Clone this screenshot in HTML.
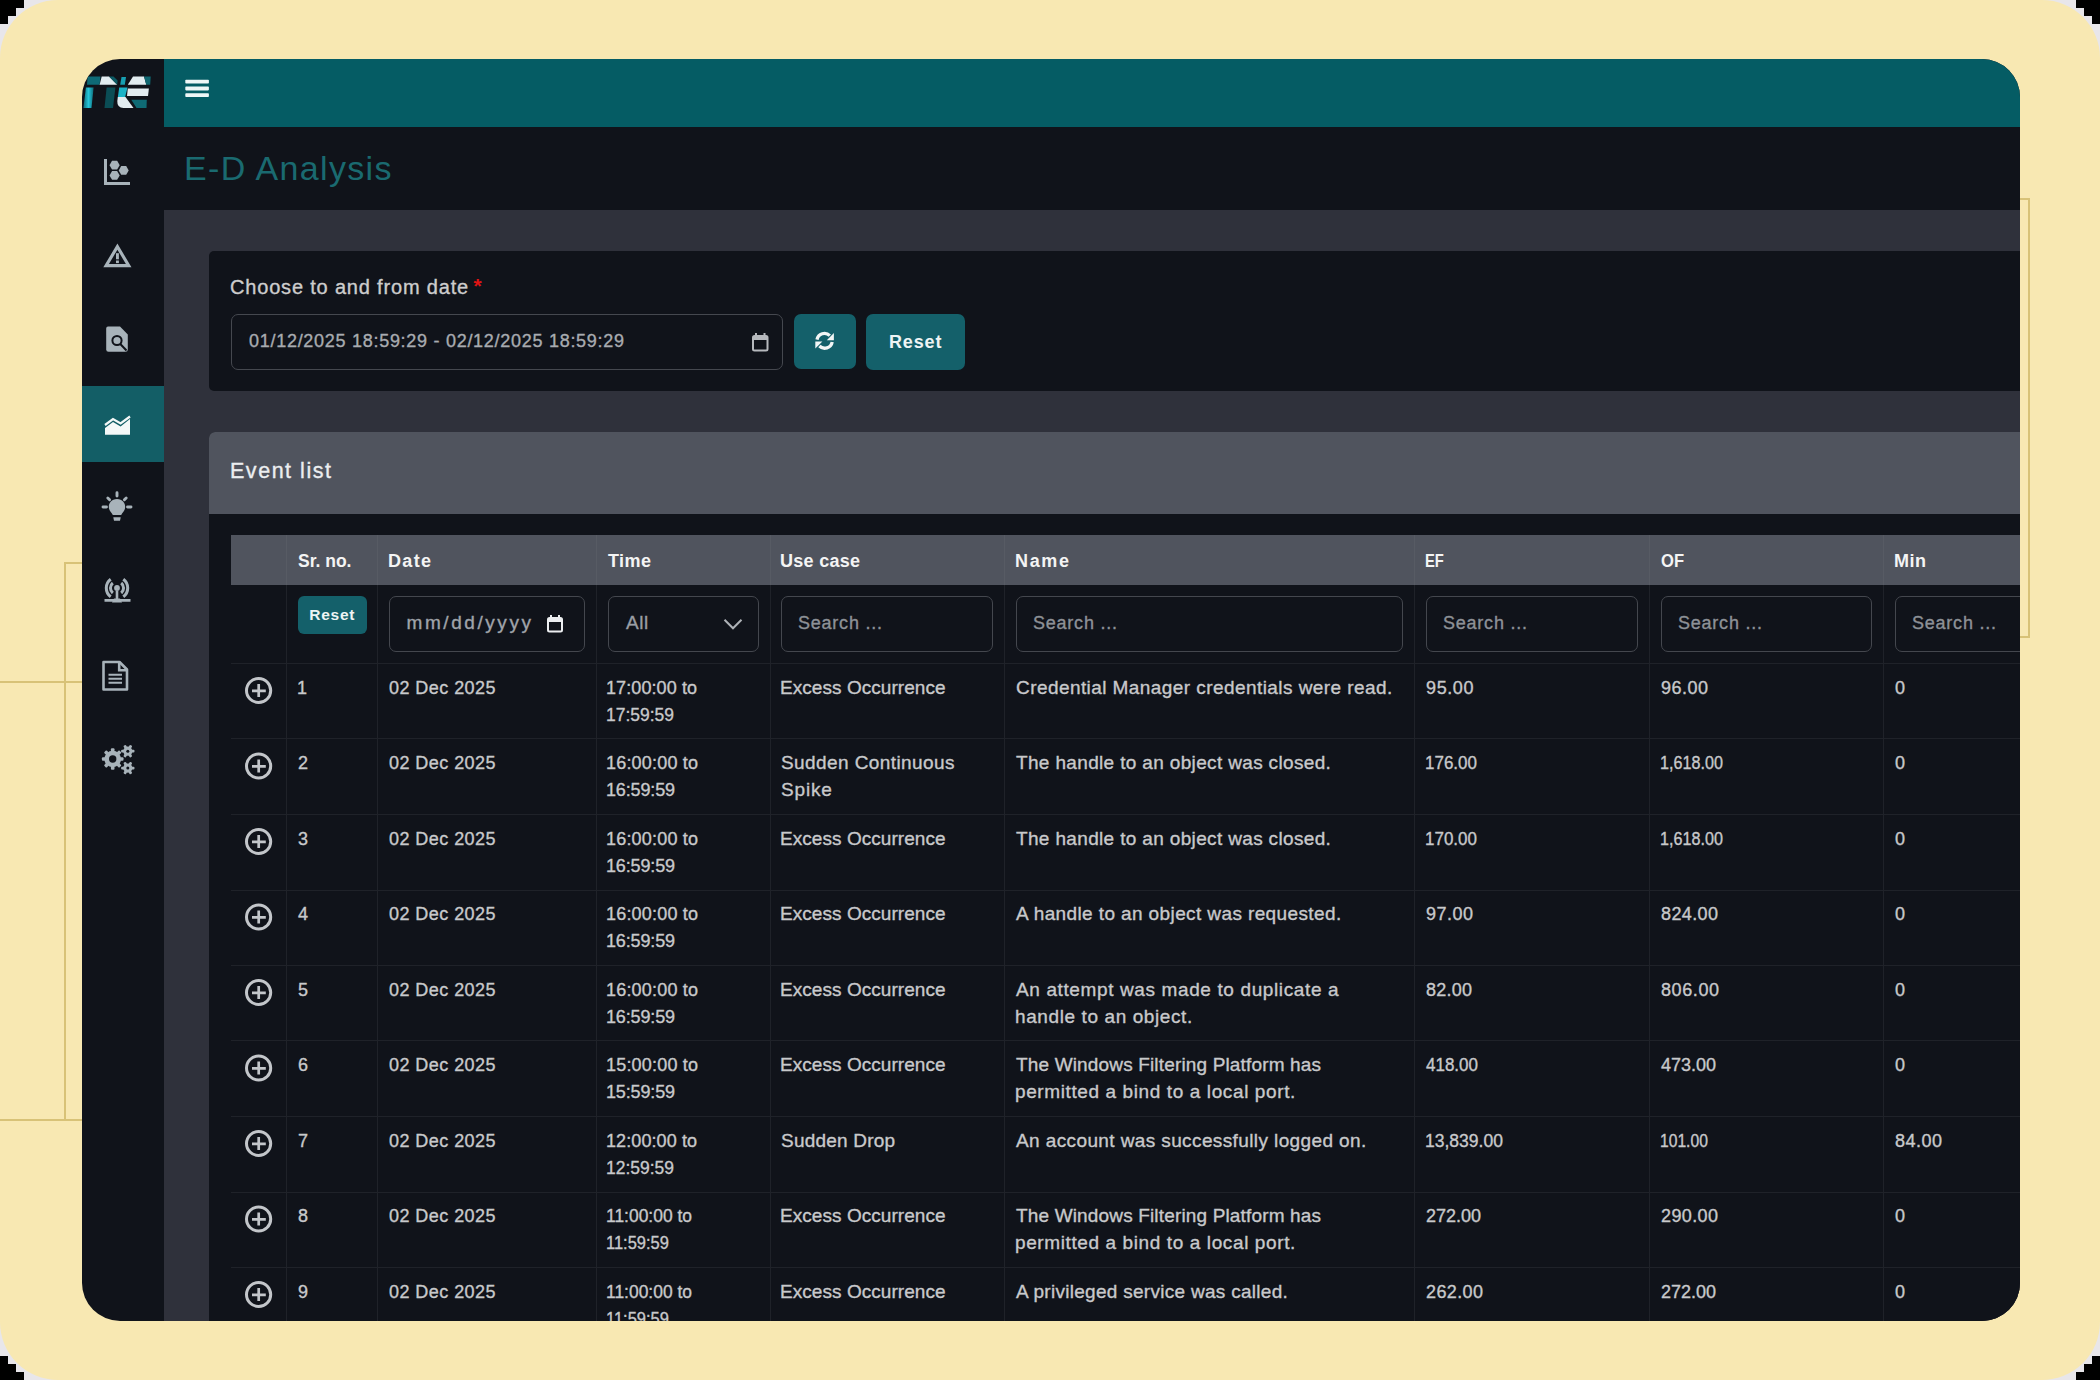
<!DOCTYPE html>
<html><head><meta charset="utf-8">
<style>
*{box-sizing:border-box;margin:0;padding:0}
html,body{width:2100px;height:1380px;overflow:hidden;background:#e8e6ea;font-family:"Liberation Sans",sans-serif}
.abs{position:absolute}
.bk{position:absolute;background:#000}
#yel{left:0;top:0;width:2100px;height:1380px;border-radius:58px;background:#f8e8b2}
.ln{position:absolute;background:#d8c277}
#frame{left:82px;top:59px;width:1938px;height:1262px;border-radius:38px;overflow:hidden;background:#10131a}
#pg{position:absolute;left:-82px;top:-59px;width:2100px;height:1380px}
.r{position:absolute}
.t{position:absolute;white-space:nowrap;-webkit-text-stroke:0.35px currentColor}
.ns{-webkit-text-stroke:0}
svg{position:absolute;left:0;top:0}
</style></head>
<body>
<div class="bk" style="left:0;top:0px;width:24px;height:8px"></div>
<div class="bk" style="right:0;top:0px;width:24px;height:8px"></div>
<div class="bk" style="left:0;bottom:0px;width:24px;height:8px"></div>
<div class="bk" style="right:0;bottom:0px;width:24px;height:8px"></div>
<div class="bk" style="left:0;top:8px;width:16px;height:8px"></div>
<div class="bk" style="right:0;top:8px;width:16px;height:8px"></div>
<div class="bk" style="left:0;bottom:8px;width:16px;height:8px"></div>
<div class="bk" style="right:0;bottom:8px;width:16px;height:8px"></div>
<div class="bk" style="left:0;top:16px;width:8px;height:8px"></div>
<div class="bk" style="right:0;top:16px;width:8px;height:8px"></div>
<div class="bk" style="left:0;bottom:16px;width:8px;height:8px"></div>
<div class="bk" style="right:0;bottom:16px;width:8px;height:8px"></div>
<div id="yel" class="abs"></div>
<div class="ln" style="left:2028px;top:198px;width:2px;height:440px"></div>
<div class="ln" style="left:2020px;top:198px;width:10px;height:2px"></div>
<div class="ln" style="left:2020px;top:636px;width:10px;height:2px"></div>
<div class="ln" style="left:64px;top:562px;width:2px;height:559px"></div>
<div class="ln" style="left:64px;top:562px;width:18px;height:2px"></div>
<div class="ln" style="left:0px;top:681px;width:82px;height:2px"></div>
<div class="ln" style="left:0px;top:1119px;width:82px;height:2px"></div>
<div id="frame" class="abs"><div id="pg">
<div class="r" style="left:164px;top:59px;width:1856px;height:68px;background:#055c64;"></div>
<div class="r" style="left:164px;top:210px;width:1856px;height:1111px;background:#2f313b;"></div>
<div class="r" style="left:82px;top:386px;width:82px;height:76px;background:#135e66;"></div>
<div class="r" style="left:209px;top:251px;width:1811px;height:140px;background:#10131a;border-radius:5px 0 0 5px"></div>
<div class="r" style="left:231px;top:314px;width:552px;height:56px;border:1.5px solid #45484f;border-radius:7px"></div>
<div class="r" style="left:794px;top:314px;width:62px;height:55px;background:#14606a;border-radius:7px"></div>
<div class="r" style="left:866px;top:314px;width:99px;height:56px;background:#14606a;border-radius:7px"></div>
<div class="r" style="left:209px;top:432px;width:1811px;height:889px;background:#10131a;border-radius:6px 0 0 0"></div>
<div class="r" style="left:209px;top:432px;width:1811px;height:82px;background:#50545e;border-radius:6px 0 0 0"></div>
<div class="r" style="left:231px;top:535px;width:1789px;height:50px;background:#50545e;"></div>
<div class="r" style="left:286px;top:585px;width:1px;height:740px;background:#1f2229;"></div>
<div class="r" style="left:286px;top:535px;width:1px;height:50px;background:#575b64;"></div>
<div class="r" style="left:377px;top:585px;width:1px;height:740px;background:#1f2229;"></div>
<div class="r" style="left:377px;top:535px;width:1px;height:50px;background:#575b64;"></div>
<div class="r" style="left:596px;top:585px;width:1px;height:740px;background:#1f2229;"></div>
<div class="r" style="left:596px;top:535px;width:1px;height:50px;background:#575b64;"></div>
<div class="r" style="left:770px;top:585px;width:1px;height:740px;background:#1f2229;"></div>
<div class="r" style="left:770px;top:535px;width:1px;height:50px;background:#575b64;"></div>
<div class="r" style="left:1004px;top:585px;width:1px;height:740px;background:#1f2229;"></div>
<div class="r" style="left:1004px;top:535px;width:1px;height:50px;background:#575b64;"></div>
<div class="r" style="left:1414px;top:585px;width:1px;height:740px;background:#1f2229;"></div>
<div class="r" style="left:1414px;top:535px;width:1px;height:50px;background:#575b64;"></div>
<div class="r" style="left:1649px;top:585px;width:1px;height:740px;background:#1f2229;"></div>
<div class="r" style="left:1649px;top:535px;width:1px;height:50px;background:#575b64;"></div>
<div class="r" style="left:1883px;top:585px;width:1px;height:740px;background:#1f2229;"></div>
<div class="r" style="left:1883px;top:535px;width:1px;height:50px;background:#575b64;"></div>
<div class="r" style="left:231px;top:663px;width:1789px;height:1px;background:#1f2229;"></div>
<div class="r" style="left:231px;top:738px;width:1789px;height:1px;background:#1f2229;"></div>
<div class="r" style="left:231px;top:814px;width:1789px;height:1px;background:#1f2229;"></div>
<div class="r" style="left:231px;top:890px;width:1789px;height:1px;background:#1f2229;"></div>
<div class="r" style="left:231px;top:965px;width:1789px;height:1px;background:#1f2229;"></div>
<div class="r" style="left:231px;top:1040px;width:1789px;height:1px;background:#1f2229;"></div>
<div class="r" style="left:231px;top:1116px;width:1789px;height:1px;background:#1f2229;"></div>
<div class="r" style="left:231px;top:1192px;width:1789px;height:1px;background:#1f2229;"></div>
<div class="r" style="left:231px;top:1267px;width:1789px;height:1px;background:#1f2229;"></div>
<div class="r" style="left:298px;top:596px;width:69px;height:38px;background:#14606a;border-radius:6px"></div>
<div class="r" style="left:389px;top:596px;width:196px;height:55.5px;border:1.5px solid #44474e;border-radius:7px"></div>
<div class="r" style="left:607.5px;top:596px;width:151.5px;height:55.5px;border:1.5px solid #44474e;border-radius:7px"></div>
<div class="r" style="left:781px;top:596px;width:212px;height:55.5px;border:1.5px solid #44474e;border-radius:7px"></div>
<div class="r" style="left:1016px;top:596px;width:387px;height:55.5px;border:1.5px solid #44474e;border-radius:7px"></div>
<div class="r" style="left:1426px;top:596px;width:211.5px;height:55.5px;border:1.5px solid #44474e;border-radius:7px"></div>
<div class="r" style="left:1660.5px;top:596px;width:211.5px;height:55.5px;border:1.5px solid #44474e;border-radius:7px"></div>
<div class="r" style="left:1895px;top:596px;width:215px;height:55.5px;border:1.5px solid #44474e;border-radius:7px"></div>
<svg width="2100" height="1380" viewBox="0 0 2100 1380">
<defs><linearGradient id="lgc" x1="0" y1="0" x2="1" y2="0"><stop offset="0" stop-color="#0f6d7a"/><stop offset="0.5" stop-color="#25c6da"/><stop offset="1" stop-color="#0f6d7a"/></linearGradient></defs>
<polygon points="87.6,76.6 100.5,76.6 99.6,84.7 87,84.7" fill="#0e6a76"/>
<polygon points="101.7,76.6 109,76.6 117.2,84.7 99.6,84.7" fill="#e2ecf0"/>
<polygon points="109,76.6 113.5,76.6 117.6,80.5 117.2,84.7" fill="#0b5a64"/>
<polygon points="121.5,77 126,77 124.8,84.7 120.2,84.7" fill="#179fb2"/>
<polygon points="133,76.6 144,76.6 146.3,84.7 127.8,84.7" fill="#e2ecf0"/>
<polygon points="144,76.6 150.7,76.6 150.2,84.7 146.3,84.7" fill="#0f6670"/>
<polygon points="85.9,87.5 93.6,87.5 91.5,107.9 83.4,107.9" fill="url(#lgc)"/>
<polygon points="106.6,87.5 115.4,87.5 113,107.9 104.5,107.9" fill="#0b4d55"/>
<polygon points="119.2,87.5 127.5,87.5 125,97.5 117.8,97.5" fill="#1cb3c7"/>
<path d="M117.8 97 H125.5 L133.5 107.9 H123.5 Q117 107.9 117.3 101 Z" fill="#e2ecf0"/>
<polygon points="127.8,88.5 148.9,88.5 148,96 127,96" fill="#e2ecf0"/>
<polygon points="131.3,99.8 146.8,99.8 146.5,107.9 136.5,107.9" fill="#0f6a74"/>
<path d="M105.5 159 V183.5 H130" fill="none" stroke="#a8b3ba" stroke-width="3"/>
<polygon points="119.70,165.20 117.15,169.62 112.05,169.62 109.50,165.20 112.05,160.78 117.15,160.78" fill="#a8b3ba"/>
<polygon points="119.70,175.40 117.15,179.82 112.05,179.82 109.50,175.40 112.05,170.98 117.15,170.98" fill="#a8b3ba"/>
<polygon points="128.70,170.40 126.20,174.73 121.20,174.73 118.70,170.40 121.20,166.07 126.20,166.07" fill="#a8b3ba"/>
<path fill-rule="evenodd" d="M117.4 243.6 L103.3 267.3 H131.5 Z M117.4 249.8 L108.9 263.9 H125.9 Z" fill="#a8b3ba"/>
<rect x="116" y="253.2" width="2.9" height="6.1" fill="#a8b3ba"/><rect x="116" y="260.5" width="2.9" height="2.6" fill="#a8b3ba"/>
<path d="M108 326.5 H120 L127.8 334.5 V349.5 Q127.8 351.8 125.5 351.8 H108.5 Q106.2 351.8 106.2 349.5 V328.5 Q106.2 326.5 108 326.5 Z" fill="#a8b3ba"/>
<circle cx="117" cy="340.5" r="4.6" fill="none" stroke="#10131a" stroke-width="2"/><path d="M120.3 344 L126.5 350.5" stroke="#10131a" stroke-width="2"/>
<path d="M105 428 L113 422 L120.6 426.5 L130 419 V434.8 H105 Z" fill="#f4f8f8"/>
<path d="M105 425 L113 419 L120.6 423.5 L130 416.5" fill="none" stroke="#f4f8f8" stroke-width="2.2"/>
<path d="M117 499 C111.6 499 108.8 503 108.8 507 C108.8 510.5 111.5 512.5 112.8 515 H121.2 C122.5 512.5 125.2 510.5 125.2 507 C125.2 503 122.4 499 117 499 Z" fill="#a8b3ba"/>
<path d="M113.3 517.3 H120.7 L120 520.8 H114 Z" fill="#a8b3ba"/>
<path d="M117 492.8 V496 M107.8 498 L109.6 499.8 M126.2 498 L124.4 499.8 M103 507 H106.5 M127.5 507 H131" stroke="#a8b3ba" stroke-width="2.9" stroke-linecap="round"/>
<circle cx="117" cy="588" r="2.9" fill="#a8b3ba"/>
<path d="M112.8 583 A6.5 6.5 0 0 0 112.8 593 M121.2 583 A6.5 6.5 0 0 1 121.2 593" fill="none" stroke="#a8b3ba" stroke-width="3"/>
<path d="M110.7 579.2 A11 11 0 0 0 110.7 596.8 M123.3 579.2 A11 11 0 0 1 123.3 596.8" fill="none" stroke="#a8b3ba" stroke-width="3"/>
<path d="M117 591 V599 M104.5 600.4 H130.5" stroke="#a8b3ba" stroke-width="2.6"/><path d="M114 598.5 H120 L122 602.5 H112 Z" fill="#a8b3ba"/>
<path d="M103.5 662 H119.5 L127 669.5 V689.5 H103.5 Z" fill="none" stroke="#a8b3ba" stroke-width="2.6" stroke-linejoin="round"/>
<path d="M119.2 662 V670.2 H127" fill="none" stroke="#a8b3ba" stroke-width="2.6"/>
<path d="M108.5 674.8 H122 M108.5 678.8 H122 M108.5 682.8 H122" stroke="#a8b3ba" stroke-width="2"/>
<g transform="translate(112.7,759)"><circle r="8.3" fill="#a8b3ba"/><rect x="-1.8" y="-10.8" width="3.6" height="4" rx="1" fill="#a8b3ba" transform="rotate(0)"/><rect x="-1.8" y="-10.8" width="3.6" height="4" rx="1" fill="#a8b3ba" transform="rotate(45)"/><rect x="-1.8" y="-10.8" width="3.6" height="4" rx="1" fill="#a8b3ba" transform="rotate(90)"/><rect x="-1.8" y="-10.8" width="3.6" height="4" rx="1" fill="#a8b3ba" transform="rotate(135)"/><rect x="-1.8" y="-10.8" width="3.6" height="4" rx="1" fill="#a8b3ba" transform="rotate(180)"/><rect x="-1.8" y="-10.8" width="3.6" height="4" rx="1" fill="#a8b3ba" transform="rotate(225)"/><rect x="-1.8" y="-10.8" width="3.6" height="4" rx="1" fill="#a8b3ba" transform="rotate(270)"/><rect x="-1.8" y="-10.8" width="3.6" height="4" rx="1" fill="#a8b3ba" transform="rotate(315)"/><circle r="3.7" fill="#10131a"/></g>
<g transform="translate(127.8,751.2)"><circle r="4.6" fill="#a8b3ba"/><rect x="-1.4" y="-6.7" width="2.8" height="3.6" rx="1" fill="#a8b3ba" transform="rotate(90)"/><rect x="-1.4" y="-6.7" width="2.8" height="3.6" rx="1" fill="#a8b3ba" transform="rotate(150)"/><rect x="-1.4" y="-6.7" width="2.8" height="3.6" rx="1" fill="#a8b3ba" transform="rotate(210)"/><rect x="-1.4" y="-6.7" width="2.8" height="3.6" rx="1" fill="#a8b3ba" transform="rotate(270)"/><rect x="-1.4" y="-6.7" width="2.8" height="3.6" rx="1" fill="#a8b3ba" transform="rotate(330)"/><rect x="-1.4" y="-6.7" width="2.8" height="3.6" rx="1" fill="#a8b3ba" transform="rotate(390)"/><circle r="1.5" fill="#10131a"/></g>
<g transform="translate(127.8,768.1)"><circle r="4.6" fill="#a8b3ba"/><rect x="-1.4" y="-6.7" width="2.8" height="3.6" rx="1" fill="#a8b3ba" transform="rotate(90)"/><rect x="-1.4" y="-6.7" width="2.8" height="3.6" rx="1" fill="#a8b3ba" transform="rotate(150)"/><rect x="-1.4" y="-6.7" width="2.8" height="3.6" rx="1" fill="#a8b3ba" transform="rotate(210)"/><rect x="-1.4" y="-6.7" width="2.8" height="3.6" rx="1" fill="#a8b3ba" transform="rotate(270)"/><rect x="-1.4" y="-6.7" width="2.8" height="3.6" rx="1" fill="#a8b3ba" transform="rotate(330)"/><rect x="-1.4" y="-6.7" width="2.8" height="3.6" rx="1" fill="#a8b3ba" transform="rotate(390)"/><circle r="1.5" fill="#10131a"/></g>
<rect x="185.3" y="79.8" width="23.6" height="3.8" rx="0.8" fill="#eef7f7"/>
<rect x="185.3" y="86.6" width="23.6" height="3.8" rx="0.8" fill="#eef7f7"/>
<rect x="185.3" y="93.3" width="23.6" height="3.8" rx="0.8" fill="#eef7f7"/>
<circle cx="258.6" cy="690.5" r="12.1" fill="none" stroke="#c3c6ca" stroke-width="3"/>
<path d="M252 690.8 h13.8 M258.7 684.1 v12.8" stroke="#c3c6ca" stroke-width="2.7" fill="none"/>
<circle cx="258.6" cy="766" r="12.1" fill="none" stroke="#c3c6ca" stroke-width="3"/>
<path d="M252 766.3 h13.8 M258.7 759.6 v12.8" stroke="#c3c6ca" stroke-width="2.7" fill="none"/>
<circle cx="258.6" cy="841.5" r="12.1" fill="none" stroke="#c3c6ca" stroke-width="3"/>
<path d="M252 841.8 h13.8 M258.7 835.1 v12.8" stroke="#c3c6ca" stroke-width="2.7" fill="none"/>
<circle cx="258.6" cy="917" r="12.1" fill="none" stroke="#c3c6ca" stroke-width="3"/>
<path d="M252 917.3 h13.8 M258.7 910.6 v12.8" stroke="#c3c6ca" stroke-width="2.7" fill="none"/>
<circle cx="258.6" cy="992.5" r="12.1" fill="none" stroke="#c3c6ca" stroke-width="3"/>
<path d="M252 992.8 h13.8 M258.7 986.1 v12.8" stroke="#c3c6ca" stroke-width="2.7" fill="none"/>
<circle cx="258.6" cy="1068" r="12.1" fill="none" stroke="#c3c6ca" stroke-width="3"/>
<path d="M252 1068.3 h13.8 M258.7 1061.6 v12.8" stroke="#c3c6ca" stroke-width="2.7" fill="none"/>
<circle cx="258.6" cy="1143.5" r="12.1" fill="none" stroke="#c3c6ca" stroke-width="3"/>
<path d="M252 1143.8 h13.8 M258.7 1137.1 v12.8" stroke="#c3c6ca" stroke-width="2.7" fill="none"/>
<circle cx="258.6" cy="1219" r="12.1" fill="none" stroke="#c3c6ca" stroke-width="3"/>
<path d="M252 1219.3 h13.8 M258.7 1212.6 v12.8" stroke="#c3c6ca" stroke-width="2.7" fill="none"/>
<circle cx="258.6" cy="1294.5" r="12.1" fill="none" stroke="#c3c6ca" stroke-width="3"/>
<path d="M252 1294.8 h13.8 M258.7 1288.1 v12.8" stroke="#c3c6ca" stroke-width="2.7" fill="none"/>
<path d="M724.5 619.8 L733 628.3 L741.5 619.8" stroke="#aeb2b7" stroke-width="2" fill="none"/>
<rect x="753" y="336" width="14.5" height="14.5" rx="1.5" fill="none" stroke="#b6b9bd" stroke-width="2"/>
<rect x="753" y="336" width="14.5" height="4" fill="#b6b9bd"/>
<rect x="755" y="333" width="2" height="3.5" fill="#b6b9bd"/><rect x="763.5" y="333" width="2" height="3.5" fill="#b6b9bd"/>
<rect x="548" y="618" width="14" height="13.5" rx="1.5" fill="none" stroke="#eceef0" stroke-width="2"/>
<rect x="548" y="618" width="14" height="4" fill="#eceef0"/>
<rect x="550" y="615" width="2" height="3.5" fill="#eceef0"/><rect x="558" y="615" width="2" height="3.5" fill="#eceef0"/>
<g transform="translate(824.6,340.8)" fill="none" stroke="#f2f6f6" stroke-width="3.3"><path d="M-7.6 -1.2 A7.6 7.6 0 0 1 5.2 -5.2"/><path d="M7.6 1.2 A7.6 7.6 0 0 1 -5.2 5.2"/></g>
<path d="M9.3 -7.8 V-0.6 H2.2 Z" transform="translate(824.6,340.8)" fill="#f2f6f6"/>
<path d="M-9.3 7.8 V0.6 H-2.2 Z" transform="translate(824.6,340.8)" fill="#f2f6f6"/>
<text x="473.5" y="292.5" font-family="Liberation Sans" font-size="21" font-weight="700" fill="#e01414">*</text>
</svg>
<div class="t ns" style="left:184.0px;top:150.80px;font-size:34px;line-height:34px;font-weight:400;color:#1a6a70;letter-spacing:1.345px">E-D Analysis</div>
<div class="t" style="left:230.0px;top:277.00px;font-size:20px;line-height:20px;font-weight:400;color:#cdcdcd;letter-spacing:0.818px">Choose to and from date</div>
<div class="t" style="left:249.0px;top:332.30px;font-size:18px;line-height:18px;font-weight:400;color:#a8abb0;letter-spacing:0.718px">01/12/2025 18:59:29 - 02/12/2025 18:59:29</div>
<div class="t ns" style="left:889.0px;top:332.80px;font-size:18px;line-height:18px;font-weight:700;color:#eef4f4;letter-spacing:0.867px">Reset</div>
<div class="t" style="left:230.0px;top:461.05px;font-size:21.5px;line-height:21.5px;font-weight:400;color:#eceef0;letter-spacing:1.527px">Event list</div>
<div class="t ns" style="left:298.0px;top:552.00px;font-size:18px;line-height:18px;font-weight:700;color:#f4f4f4;letter-spacing:0.000px;transform:scaleX(0.9720);transform-origin:0 0">Sr. no.</div>
<div class="t ns" style="left:388.0px;top:552.00px;font-size:18px;line-height:18px;font-weight:700;color:#f4f4f4;letter-spacing:1.332px">Date</div>
<div class="t ns" style="left:608.0px;top:552.00px;font-size:18px;line-height:18px;font-weight:700;color:#f4f4f4;letter-spacing:0.441px">Time</div>
<div class="t ns" style="left:780.0px;top:552.00px;font-size:18px;line-height:18px;font-weight:700;color:#f4f4f4;letter-spacing:0.278px">Use case</div>
<div class="t ns" style="left:1015.0px;top:552.00px;font-size:18px;line-height:18px;font-weight:700;color:#f4f4f4;letter-spacing:1.662px">Name</div>
<div class="t ns" style="left:1425.2px;top:552.00px;font-size:18px;line-height:18px;font-weight:700;color:#f4f4f4;letter-spacing:0.000px;transform:scaleX(0.8180);transform-origin:0 0">EF</div>
<div class="t ns" style="left:1661.0px;top:552.00px;font-size:18px;line-height:18px;font-weight:700;color:#f4f4f4;letter-spacing:0.000px;transform:scaleX(0.9200);transform-origin:0 0">OF</div>
<div class="t ns" style="left:1894.0px;top:552.00px;font-size:18px;line-height:18px;font-weight:700;color:#f4f4f4;letter-spacing:0.502px">Min</div>
<div class="t ns" style="left:309.3px;top:606.75px;font-size:15.5px;line-height:15.5px;font-weight:700;color:#eef4f4;letter-spacing:0.736px">Reset</div>
<div class="t" style="left:406.5px;top:613.40px;font-size:19px;line-height:19px;font-weight:400;color:#a0a4aa;letter-spacing:2.573px">mm/dd/yyyy</div>
<div class="t" style="left:626.0px;top:613.40px;font-size:19px;line-height:19px;font-weight:400;color:#9a9ea4;letter-spacing:0.553px">All</div>
<div class="t" style="left:798.0px;top:614.40px;font-size:18px;line-height:18px;font-weight:400;color:#8d9197;letter-spacing:0.774px">Search ...</div>
<div class="t" style="left:1033.0px;top:614.40px;font-size:18px;line-height:18px;font-weight:400;color:#8d9197;letter-spacing:0.774px">Search ...</div>
<div class="t" style="left:1443.0px;top:614.40px;font-size:18px;line-height:18px;font-weight:400;color:#8d9197;letter-spacing:0.774px">Search ...</div>
<div class="t" style="left:1678.0px;top:614.40px;font-size:18px;line-height:18px;font-weight:400;color:#8d9197;letter-spacing:0.774px">Search ...</div>
<div class="t" style="left:1912.0px;top:614.40px;font-size:18px;line-height:18px;font-weight:400;color:#8d9197;letter-spacing:0.774px">Search ...</div>
<div class="t" style="left:297.0px;top:678.80px;font-size:18px;line-height:18px;font-weight:400;color:#c8c9cb;letter-spacing:0.000px">1</div>
<div class="t" style="left:389.0px;top:678.80px;font-size:18px;line-height:18px;font-weight:400;color:#c8c9cb;letter-spacing:0.443px">02 Dec 2025</div>
<div class="t" style="left:606.0px;top:678.80px;font-size:18px;line-height:18px;font-weight:400;color:#c8c9cb;letter-spacing:0.093px">17:00:00 to</div>
<div class="t" style="left:606.0px;top:705.80px;font-size:18px;line-height:18px;font-weight:400;color:#c8c9cb;letter-spacing:0.000px;transform:scaleX(0.9702);transform-origin:0 0">17:59:59</div>
<div class="t" style="left:780.0px;top:677.80px;font-size:19px;line-height:19px;font-weight:400;color:#c8c9cb;letter-spacing:0.053px">Excess Occurrence</div>
<div class="t" style="left:1016.0px;top:677.80px;font-size:19px;line-height:19px;font-weight:400;color:#c8c9cb;letter-spacing:0.430px">Credential Manager credentials were read.</div>
<div class="t" style="left:1426.0px;top:678.80px;font-size:18px;line-height:18px;font-weight:400;color:#c8c9cb;letter-spacing:0.617px">95.00</div>
<div class="t" style="left:1661.0px;top:678.80px;font-size:18px;line-height:18px;font-weight:400;color:#c8c9cb;letter-spacing:0.492px">96.00</div>
<div class="t" style="left:1895.0px;top:678.80px;font-size:18px;line-height:18px;font-weight:400;color:#c8c9cb;letter-spacing:0.000px">0</div>
<div class="t" style="left:298.0px;top:754.30px;font-size:18px;line-height:18px;font-weight:400;color:#c8c9cb;letter-spacing:0.000px">2</div>
<div class="t" style="left:389.0px;top:754.30px;font-size:18px;line-height:18px;font-weight:400;color:#c8c9cb;letter-spacing:0.443px">02 Dec 2025</div>
<div class="t" style="left:606.0px;top:754.30px;font-size:18px;line-height:18px;font-weight:400;color:#c8c9cb;letter-spacing:0.193px">16:00:00 to</div>
<div class="t" style="left:606.0px;top:781.30px;font-size:18px;line-height:18px;font-weight:400;color:#c8c9cb;letter-spacing:-0.151px">16:59:59</div>
<div class="t" style="left:781.0px;top:753.30px;font-size:19px;line-height:19px;font-weight:400;color:#c8c9cb;letter-spacing:0.412px">Sudden Continuous</div>
<div class="t" style="left:781.0px;top:780.30px;font-size:19px;line-height:19px;font-weight:400;color:#c8c9cb;letter-spacing:0.822px">Spike</div>
<div class="t" style="left:1016.0px;top:753.30px;font-size:19px;line-height:19px;font-weight:400;color:#c8c9cb;letter-spacing:0.345px">The handle to an object was closed.</div>
<div class="t" style="left:1425.1px;top:754.30px;font-size:18px;line-height:18px;font-weight:400;color:#c8c9cb;letter-spacing:0.000px;transform:scaleX(0.9437);transform-origin:0 0">176.00</div>
<div class="t" style="left:1660.1px;top:754.30px;font-size:18px;line-height:18px;font-weight:400;color:#c8c9cb;letter-spacing:0.000px;transform:scaleX(0.8978);transform-origin:0 0">1,618.00</div>
<div class="t" style="left:1895.0px;top:754.30px;font-size:18px;line-height:18px;font-weight:400;color:#c8c9cb;letter-spacing:0.000px">0</div>
<div class="t" style="left:298.0px;top:829.80px;font-size:18px;line-height:18px;font-weight:400;color:#c8c9cb;letter-spacing:0.000px">3</div>
<div class="t" style="left:389.0px;top:829.80px;font-size:18px;line-height:18px;font-weight:400;color:#c8c9cb;letter-spacing:0.443px">02 Dec 2025</div>
<div class="t" style="left:606.0px;top:829.80px;font-size:18px;line-height:18px;font-weight:400;color:#c8c9cb;letter-spacing:0.193px">16:00:00 to</div>
<div class="t" style="left:606.0px;top:856.80px;font-size:18px;line-height:18px;font-weight:400;color:#c8c9cb;letter-spacing:-0.151px">16:59:59</div>
<div class="t" style="left:780.0px;top:828.80px;font-size:19px;line-height:19px;font-weight:400;color:#c8c9cb;letter-spacing:0.053px">Excess Occurrence</div>
<div class="t" style="left:1016.0px;top:828.80px;font-size:19px;line-height:19px;font-weight:400;color:#c8c9cb;letter-spacing:0.345px">The handle to an object was closed.</div>
<div class="t" style="left:1425.1px;top:829.80px;font-size:18px;line-height:18px;font-weight:400;color:#c8c9cb;letter-spacing:0.000px;transform:scaleX(0.9437);transform-origin:0 0">170.00</div>
<div class="t" style="left:1660.1px;top:829.80px;font-size:18px;line-height:18px;font-weight:400;color:#c8c9cb;letter-spacing:0.000px;transform:scaleX(0.8978);transform-origin:0 0">1,618.00</div>
<div class="t" style="left:1895.0px;top:829.80px;font-size:18px;line-height:18px;font-weight:400;color:#c8c9cb;letter-spacing:0.000px">0</div>
<div class="t" style="left:298.0px;top:905.30px;font-size:18px;line-height:18px;font-weight:400;color:#c8c9cb;letter-spacing:0.000px">4</div>
<div class="t" style="left:389.0px;top:905.30px;font-size:18px;line-height:18px;font-weight:400;color:#c8c9cb;letter-spacing:0.443px">02 Dec 2025</div>
<div class="t" style="left:606.0px;top:905.30px;font-size:18px;line-height:18px;font-weight:400;color:#c8c9cb;letter-spacing:0.193px">16:00:00 to</div>
<div class="t" style="left:606.0px;top:932.30px;font-size:18px;line-height:18px;font-weight:400;color:#c8c9cb;letter-spacing:-0.151px">16:59:59</div>
<div class="t" style="left:780.0px;top:904.30px;font-size:19px;line-height:19px;font-weight:400;color:#c8c9cb;letter-spacing:0.053px">Excess Occurrence</div>
<div class="t" style="left:1016.0px;top:904.30px;font-size:19px;line-height:19px;font-weight:400;color:#c8c9cb;letter-spacing:0.389px">A handle to an object was requested.</div>
<div class="t" style="left:1426.0px;top:905.30px;font-size:18px;line-height:18px;font-weight:400;color:#c8c9cb;letter-spacing:0.492px">97.00</div>
<div class="t" style="left:1661.0px;top:905.30px;font-size:18px;line-height:18px;font-weight:400;color:#c8c9cb;letter-spacing:0.391px">824.00</div>
<div class="t" style="left:1895.0px;top:905.30px;font-size:18px;line-height:18px;font-weight:400;color:#c8c9cb;letter-spacing:0.000px">0</div>
<div class="t" style="left:298.0px;top:980.80px;font-size:18px;line-height:18px;font-weight:400;color:#c8c9cb;letter-spacing:0.000px">5</div>
<div class="t" style="left:389.0px;top:980.80px;font-size:18px;line-height:18px;font-weight:400;color:#c8c9cb;letter-spacing:0.443px">02 Dec 2025</div>
<div class="t" style="left:606.0px;top:980.80px;font-size:18px;line-height:18px;font-weight:400;color:#c8c9cb;letter-spacing:0.193px">16:00:00 to</div>
<div class="t" style="left:606.0px;top:1007.80px;font-size:18px;line-height:18px;font-weight:400;color:#c8c9cb;letter-spacing:-0.151px">16:59:59</div>
<div class="t" style="left:780.0px;top:979.80px;font-size:19px;line-height:19px;font-weight:400;color:#c8c9cb;letter-spacing:0.053px">Excess Occurrence</div>
<div class="t" style="left:1016.0px;top:979.80px;font-size:19px;line-height:19px;font-weight:400;color:#c8c9cb;letter-spacing:0.621px">An attempt was made to duplicate a</div>
<div class="t" style="left:1015.0px;top:1006.80px;font-size:19px;line-height:19px;font-weight:400;color:#c8c9cb;letter-spacing:0.601px">handle to an object.</div>
<div class="t" style="left:1426.0px;top:980.80px;font-size:18px;line-height:18px;font-weight:400;color:#c8c9cb;letter-spacing:0.242px">82.00</div>
<div class="t" style="left:1661.0px;top:980.80px;font-size:18px;line-height:18px;font-weight:400;color:#c8c9cb;letter-spacing:0.591px">806.00</div>
<div class="t" style="left:1895.0px;top:980.80px;font-size:18px;line-height:18px;font-weight:400;color:#c8c9cb;letter-spacing:0.000px">0</div>
<div class="t" style="left:298.0px;top:1056.30px;font-size:18px;line-height:18px;font-weight:400;color:#c8c9cb;letter-spacing:0.000px">6</div>
<div class="t" style="left:389.0px;top:1056.30px;font-size:18px;line-height:18px;font-weight:400;color:#c8c9cb;letter-spacing:0.443px">02 Dec 2025</div>
<div class="t" style="left:606.0px;top:1056.30px;font-size:18px;line-height:18px;font-weight:400;color:#c8c9cb;letter-spacing:0.193px">15:00:00 to</div>
<div class="t" style="left:606.0px;top:1083.30px;font-size:18px;line-height:18px;font-weight:400;color:#c8c9cb;letter-spacing:-0.151px">15:59:59</div>
<div class="t" style="left:780.0px;top:1055.30px;font-size:19px;line-height:19px;font-weight:400;color:#c8c9cb;letter-spacing:0.053px">Excess Occurrence</div>
<div class="t" style="left:1016.0px;top:1055.30px;font-size:19px;line-height:19px;font-weight:400;color:#c8c9cb;letter-spacing:0.155px">The Windows Filtering Platform has</div>
<div class="t" style="left:1015.0px;top:1082.30px;font-size:19px;line-height:19px;font-weight:400;color:#c8c9cb;letter-spacing:0.607px">permitted a bind to a local port.</div>
<div class="t" style="left:1426.0px;top:1056.30px;font-size:18px;line-height:18px;font-weight:400;color:#c8c9cb;letter-spacing:0.000px;transform:scaleX(0.9447);transform-origin:0 0">418.00</div>
<div class="t" style="left:1661.0px;top:1056.30px;font-size:18px;line-height:18px;font-weight:400;color:#c8c9cb;letter-spacing:-0.009px">473.00</div>
<div class="t" style="left:1895.0px;top:1056.30px;font-size:18px;line-height:18px;font-weight:400;color:#c8c9cb;letter-spacing:0.000px">0</div>
<div class="t" style="left:298.0px;top:1131.80px;font-size:18px;line-height:18px;font-weight:400;color:#c8c9cb;letter-spacing:0.000px">7</div>
<div class="t" style="left:389.0px;top:1131.80px;font-size:18px;line-height:18px;font-weight:400;color:#c8c9cb;letter-spacing:0.443px">02 Dec 2025</div>
<div class="t" style="left:606.0px;top:1131.80px;font-size:18px;line-height:18px;font-weight:400;color:#c8c9cb;letter-spacing:0.093px">12:00:00 to</div>
<div class="t" style="left:606.0px;top:1158.80px;font-size:18px;line-height:18px;font-weight:400;color:#c8c9cb;letter-spacing:0.000px;transform:scaleX(0.9702);transform-origin:0 0">12:59:59</div>
<div class="t" style="left:781.0px;top:1130.80px;font-size:19px;line-height:19px;font-weight:400;color:#c8c9cb;letter-spacing:0.220px">Sudden Drop</div>
<div class="t" style="left:1016.0px;top:1130.80px;font-size:19px;line-height:19px;font-weight:400;color:#c8c9cb;letter-spacing:0.390px">An account was successfully logged on.</div>
<div class="t" style="left:1425.0px;top:1131.80px;font-size:18px;line-height:18px;font-weight:400;color:#c8c9cb;letter-spacing:0.000px;transform:scaleX(0.9739);transform-origin:0 0">13,839.00</div>
<div class="t" style="left:1660.1px;top:1131.80px;font-size:18px;line-height:18px;font-weight:400;color:#c8c9cb;letter-spacing:0.000px;transform:scaleX(0.8697);transform-origin:0 0">101.00</div>
<div class="t" style="left:1895.0px;top:1131.80px;font-size:18px;line-height:18px;font-weight:400;color:#c8c9cb;letter-spacing:0.492px">84.00</div>
<div class="t" style="left:298.0px;top:1207.30px;font-size:18px;line-height:18px;font-weight:400;color:#c8c9cb;letter-spacing:0.000px">8</div>
<div class="t" style="left:389.0px;top:1207.30px;font-size:18px;line-height:18px;font-weight:400;color:#c8c9cb;letter-spacing:0.443px">02 Dec 2025</div>
<div class="t" style="left:606.0px;top:1207.30px;font-size:18px;line-height:18px;font-weight:400;color:#c8c9cb;letter-spacing:0.000px;transform:scaleX(0.9689);transform-origin:0 0">11:00:00 to</div>
<div class="t" style="left:606.1px;top:1234.30px;font-size:18px;line-height:18px;font-weight:400;color:#c8c9cb;letter-spacing:0.000px;transform:scaleX(0.9155);transform-origin:0 0">11:59:59</div>
<div class="t" style="left:780.0px;top:1206.30px;font-size:19px;line-height:19px;font-weight:400;color:#c8c9cb;letter-spacing:0.053px">Excess Occurrence</div>
<div class="t" style="left:1016.0px;top:1206.30px;font-size:19px;line-height:19px;font-weight:400;color:#c8c9cb;letter-spacing:0.155px">The Windows Filtering Platform has</div>
<div class="t" style="left:1015.0px;top:1233.30px;font-size:19px;line-height:19px;font-weight:400;color:#c8c9cb;letter-spacing:0.607px">permitted a bind to a local port.</div>
<div class="t" style="left:1426.0px;top:1207.30px;font-size:18px;line-height:18px;font-weight:400;color:#c8c9cb;letter-spacing:-0.009px">272.00</div>
<div class="t" style="left:1661.0px;top:1207.30px;font-size:18px;line-height:18px;font-weight:400;color:#c8c9cb;letter-spacing:0.391px">290.00</div>
<div class="t" style="left:1895.0px;top:1207.30px;font-size:18px;line-height:18px;font-weight:400;color:#c8c9cb;letter-spacing:0.000px">0</div>
<div class="t" style="left:298.0px;top:1282.80px;font-size:18px;line-height:18px;font-weight:400;color:#c8c9cb;letter-spacing:0.000px">9</div>
<div class="t" style="left:389.0px;top:1282.80px;font-size:18px;line-height:18px;font-weight:400;color:#c8c9cb;letter-spacing:0.443px">02 Dec 2025</div>
<div class="t" style="left:606.0px;top:1282.80px;font-size:18px;line-height:18px;font-weight:400;color:#c8c9cb;letter-spacing:0.000px;transform:scaleX(0.9689);transform-origin:0 0">11:00:00 to</div>
<div class="t" style="left:606.1px;top:1309.80px;font-size:18px;line-height:18px;font-weight:400;color:#c8c9cb;letter-spacing:0.000px;transform:scaleX(0.9155);transform-origin:0 0">11:59:59</div>
<div class="t" style="left:780.0px;top:1281.80px;font-size:19px;line-height:19px;font-weight:400;color:#c8c9cb;letter-spacing:0.053px">Excess Occurrence</div>
<div class="t" style="left:1016.0px;top:1281.80px;font-size:19px;line-height:19px;font-weight:400;color:#c8c9cb;letter-spacing:0.286px">A privileged service was called.</div>
<div class="t" style="left:1426.0px;top:1282.80px;font-size:18px;line-height:18px;font-weight:400;color:#c8c9cb;letter-spacing:0.391px">262.00</div>
<div class="t" style="left:1661.0px;top:1282.80px;font-size:18px;line-height:18px;font-weight:400;color:#c8c9cb;letter-spacing:-0.009px">272.00</div>
<div class="t" style="left:1895.0px;top:1282.80px;font-size:18px;line-height:18px;font-weight:400;color:#c8c9cb;letter-spacing:0.000px">0</div>
</div></div>
</body></html>
